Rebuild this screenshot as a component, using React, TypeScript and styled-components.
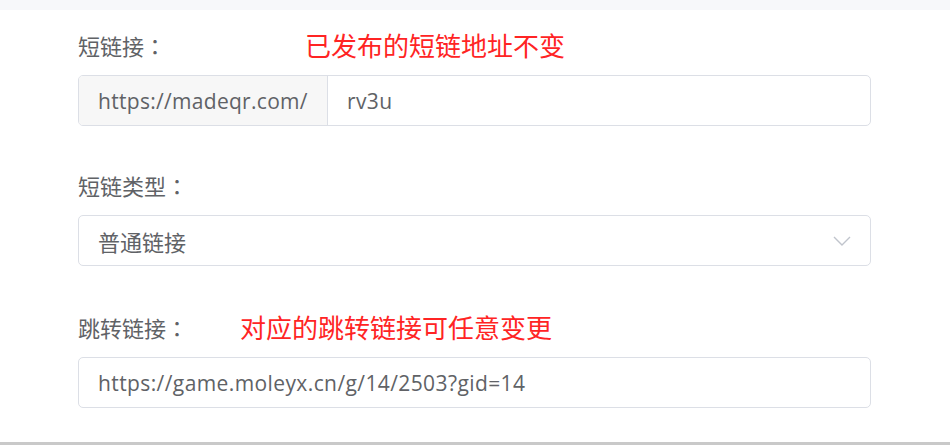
import React from "react";
import styled, { createGlobalStyle } from "styled-components";

const Global = createGlobalStyle`
  html, body { margin: 0; padding: 0; background: #ffffff; }
  body { width: 950px; height: 445px; overflow: hidden; }
  * { box-sizing: border-box; }
`;

const Page = styled.div`
  width: 950px;
  height: 445px;
  display: flex;
  flex-direction: column;
  background: #ffffff;
  font-family: "Open Sans", "Noto Sans CJK SC", sans-serif;
  color: #606266;
`;

const TopBand = styled.div`
  height: 10px;
  background: #f7f8fa;
  flex-shrink: 0;
`;

const Form = styled.div`
  flex: 1;
  display: flex;
  flex-direction: column;
  gap: 39px;
  padding: 15px 79px 0 78px;
`;

const Item = styled.div<{ $pushDown?: number }>`
  display: flex;
  flex-direction: column;
  gap: 10px;
  margin-top: ${(p) => p.$pushDown ?? 0}px;
`;

const LabelRow = styled.div<{ $noteAt: number }>`
  display: grid;
  grid-template-columns: ${(p) => p.$noteAt}px 1fr;
  align-items: center;
  height: 40px;
`;

const Label = styled.label`
  font-family: "Noto Sans CJK SC", sans-serif;
  font-size: 22px;
  color: #606266;
  line-height: 40px;
  white-space: nowrap;
`;

const Colon = styled.span`
  font-family: "Noto Sans CJK TC", sans-serif;
`;

const Note = styled.span`
  font-family: "Noto Sans CJK SC", sans-serif;
  font-size: 26px;
  color: #ff2424;
  line-height: 40px;
  white-space: nowrap;
`;

const Field = styled.div`
  height: 51px;
  display: flex;
  align-items: stretch;
  border: 1px solid #dcdfe6;
  border-radius: 5px;
  background: #ffffff;
  overflow: hidden;
`;

const Addon = styled.div`
  width: 249px;
  flex-shrink: 0;
  display: flex;
  align-items: center;
  padding-left: 19px;
  background: #f7f7f7;
  border-right: 1px solid #dcdfe6;
  font-size: 21px;
  letter-spacing: 0.3px;
  color: #606266;
  white-space: nowrap;
`;

const Value = styled.div<{ $cjk?: boolean }>`
  flex: 1;
  display: flex;
  align-items: center;
  padding-left: 19px;
  font-family: ${(p) =>
    p.$cjk ? `"Noto Sans CJK SC", sans-serif` : `"Open Sans", "Noto Sans CJK SC", sans-serif`};
  font-size: ${(p) => (p.$cjk ? "22px" : "21px")};
  letter-spacing: ${(p) => (p.$cjk ? "0" : "0.4px")};
  color: #606266;
  white-space: nowrap;
`;

const Chevron = styled.div`
  width: 56px;
  display: flex;
  align-items: center;
  justify-content: center;
  color: #c0c4cc;
`;

const BottomLine = styled.div`
  height: 3px;
  background: #c9c9c9;
  flex-shrink: 0;
`;

export default function App() {
  return (
    <Page>
      <Global />
      <TopBand />
      <Form>
        <Item>
          <LabelRow $noteAt={227}>
            <Label>
              短链接<Colon>：</Colon>
            </Label>
            <Note>已发布的短链地址不变</Note>
          </LabelRow>
          <Field>
            <Addon>https://madeqr.com/</Addon>
            <Value>rv3u</Value>
          </Field>
        </Item>
        <Item>
          <LabelRow $noteAt={227}>
            <Label>
              短链类型<Colon>：</Colon>
            </Label>
          </LabelRow>
          <Field>
            <Value $cjk>普通链接</Value>
            <Chevron>
              <svg width="18" height="10" viewBox="0 0 18 10" fill="none">
                <path d="M1 1l8 8 8-8" stroke="currentColor" strokeWidth="1.4" />
              </svg>
            </Chevron>
          </Field>
        </Item>
        <Item $pushDown={2}>
          <LabelRow $noteAt={162}>
            <Label>
              跳转链接<Colon>：</Colon>
            </Label>
            <Note>对应的跳转链接可任意变更</Note>
          </LabelRow>
          <Field>
            <Value>https://game.moleyx.cn/g/14/2503?gid=14</Value>
          </Field>
        </Item>
      </Form>
      <BottomLine />
    </Page>
  );
}
